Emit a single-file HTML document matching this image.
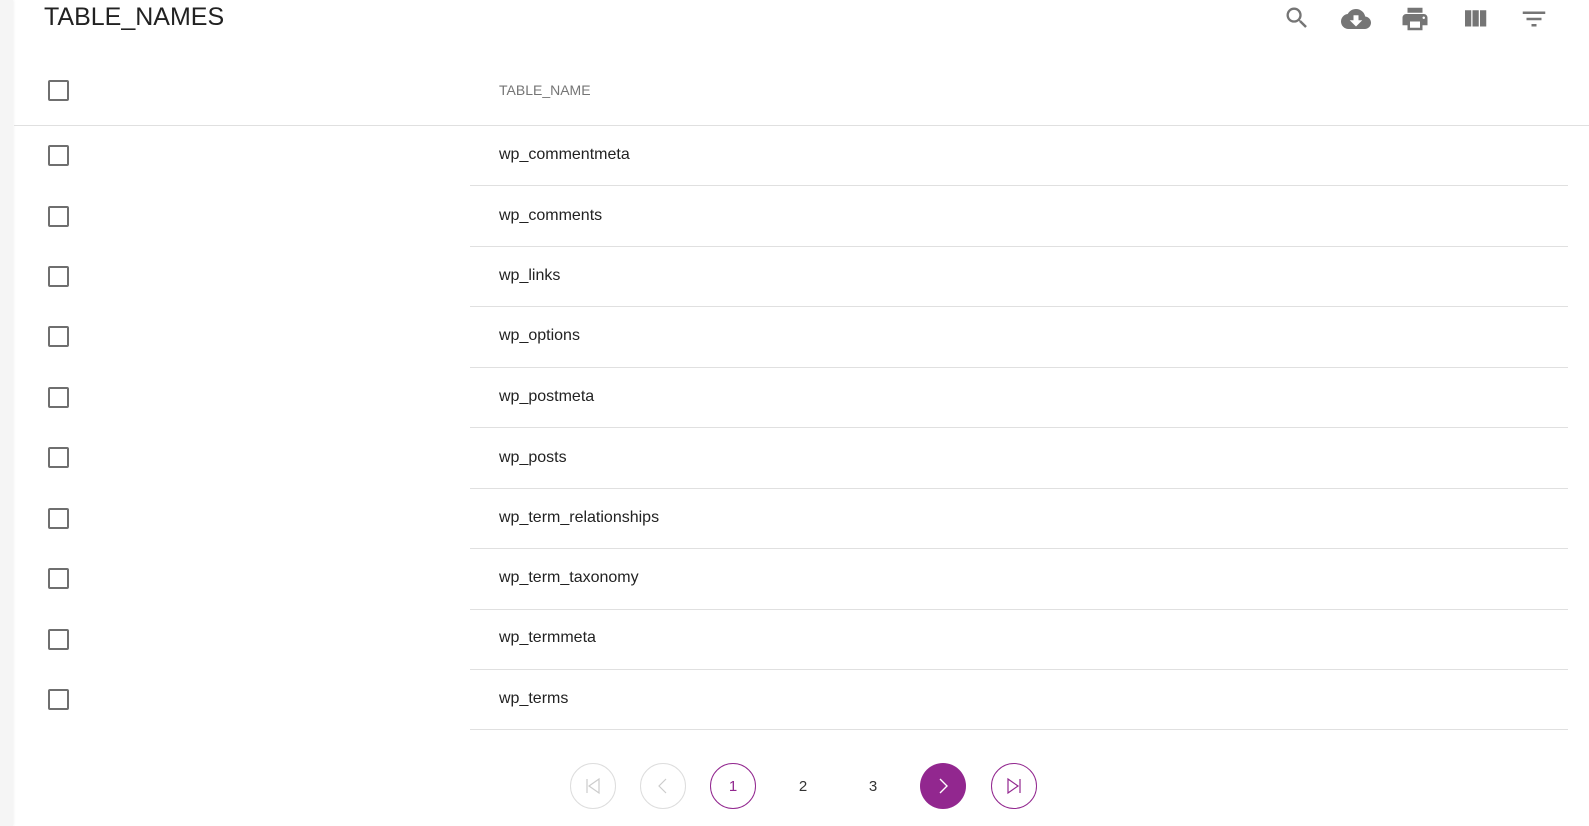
<!DOCTYPE html>
<html><head><style>
body{margin:0;width:1589px;height:826px;background:#fff;font-family:"Liberation Sans",Arial,sans-serif;position:relative;overflow:hidden}
.strip{position:absolute;left:0;top:0;width:13px;height:826px;background:#f5f5f5;box-shadow:1px 0 2px rgba(0,0,0,.05)}
.title{position:absolute;left:44px;top:3px;font-size:25px;color:#222}
.cb{position:absolute;left:48px;width:17px;height:17px;border:2px solid #6f6f6f;border-radius:2px}
.t{position:absolute;left:499px;font-size:16px;color:#222}
.hl{position:absolute;height:1px;background:#e0e0e0}
.ic{position:absolute;top:4px}
.pg{position:absolute;top:763px;width:46px;height:46px;border-radius:50%;box-sizing:border-box;display:flex;align-items:center;justify-content:center;font-size:15px;color:#333}
</style></head><body>
<div class="strip"></div>
<div class="title">TABLE_NAMES</div>
<svg class="ic" style="left:1283px" width="28" height="28" viewBox="0 0 24 24"><path fill="#757575" d="M15.5 14h-.79l-.28-.27A6.47 6.47 0 0016 9.5 6.5 6.5 0 109.5 16c1.61 0 3.09-.59 4.23-1.57l.27.28v.79l5 4.99L20.49 19l-4.99-5zm-6 0C7.01 14 5 11.99 5 9.5S7.01 5 9.5 5 14 7.01 14 9.5 11.99 14 9.5 14z"/></svg>
<svg class="ic" style="left:1339px" width="34" height="30" viewBox="0 0 24 24"><path fill="#757575" d="M19.35 10.04A7.490 7.490 0 0012 4C9.11 4 6.6 5.64 5.35 8.040A5.994 5.994 0 000 14c0 3.31 2.69 6 6 6h13c2.76 0 5-2.24 5-5 0-2.640-2.050-4.780-4.650-4.960zM17 13l-5 5-5-5h3V9h4v4h3z"/></svg>
<svg class="ic" style="left:1400px" width="30" height="30" viewBox="0 0 24 24"><path fill="#757575" d="M19 8H5c-1.66 0-3 1.34-3 3v6h4v4h12v-4h4v-6c0-1.66-1.34-3-3-3zm-3 11H8v-5h8v5zm3-7c-.55 0-1-.45-1-1s.45-1 1-1 1 .45 1 1-.45 1-1 1zm-1-9H6v4h12V3z"/></svg>
<svg class="ic" style="left:1460px" width="30" height="30" viewBox="0 0 24 24"><path fill="#757575" d="M10 18h5V5h-5v13zm-6 0h5V5H4v13zM16 5v13h5V5h-5z"/></svg>
<svg class="ic" style="left:1519px" width="30" height="30" viewBox="0 0 24 24"><path fill="#757575" d="M10 18h4v-2h-4v2zM3 6v2h18V6H3zm3 7h12v-2H6v2z"/></svg>

<div class="cb" style="top:80px"></div>
<div class="t" style="top:82px;font-size:14px;color:#757575">TABLE_NAME</div>
<div class="hl" style="left:14px;right:0;top:125px"></div>

<div class="cb" style="top:145px"></div><div class="t" style="top:146px">wp_commentmeta</div><div class="hl" style="left:470px;right:21px;top:185px"></div>
<div class="cb" style="top:206px"></div><div class="t" style="top:207px">wp_comments</div><div class="hl" style="left:470px;right:21px;top:246px"></div>
<div class="cb" style="top:266px"></div><div class="t" style="top:267px">wp_links</div><div class="hl" style="left:470px;right:21px;top:306px"></div>
<div class="cb" style="top:326px"></div><div class="t" style="top:327px">wp_options</div><div class="hl" style="left:470px;right:21px;top:367px"></div>
<div class="cb" style="top:387px"></div><div class="t" style="top:388px">wp_postmeta</div><div class="hl" style="left:470px;right:21px;top:427px"></div>
<div class="cb" style="top:447px"></div><div class="t" style="top:449px">wp_posts</div><div class="hl" style="left:470px;right:21px;top:488px"></div>
<div class="cb" style="top:508px"></div><div class="t" style="top:509px">wp_term_relationships</div><div class="hl" style="left:470px;right:21px;top:548px"></div>
<div class="cb" style="top:568px"></div><div class="t" style="top:569px">wp_term_taxonomy</div><div class="hl" style="left:470px;right:21px;top:609px"></div>
<div class="cb" style="top:629px"></div><div class="t" style="top:629px">wp_termmeta</div><div class="hl" style="left:470px;right:21px;top:669px"></div>
<div class="cb" style="top:689px"></div><div class="t" style="top:690px">wp_terms</div><div class="hl" style="left:470px;right:21px;top:729px"></div>

<div class="pg" style="left:570px;border:1px solid #ddd"><svg width="18" height="18" viewBox="0 0 18 18"><path d="M3 2v14M15 2L5 9l10 7z" fill="none" stroke="#ccc" stroke-width="1.2"/></svg></div>
<div class="pg" style="left:640px;border:1px solid #ddd"><svg width="18" height="18" viewBox="0 0 18 18"><path d="M12 2L5 9l7 7" fill="none" stroke="#ccc" stroke-width="1.2"/></svg></div>
<div class="pg" style="left:710px;border:1.5px solid #92278f;color:#92278f">1</div>
<div class="pg" style="left:780px">2</div>
<div class="pg" style="left:850px">3</div>
<div class="pg" style="left:920px;background:#92278f"><svg width="18" height="18" viewBox="0 0 18 18"><path d="M6 2l7 7-7 7" fill="none" stroke="#fff" stroke-width="1.4"/></svg></div>
<div class="pg" style="left:991px;border:1.5px solid #92278f"><svg width="18" height="18" viewBox="0 0 18 18"><path d="M15 2v14M3 2l10 7-10 7z" fill="none" stroke="#92278f" stroke-width="1.2"/></svg></div>
</body></html>
